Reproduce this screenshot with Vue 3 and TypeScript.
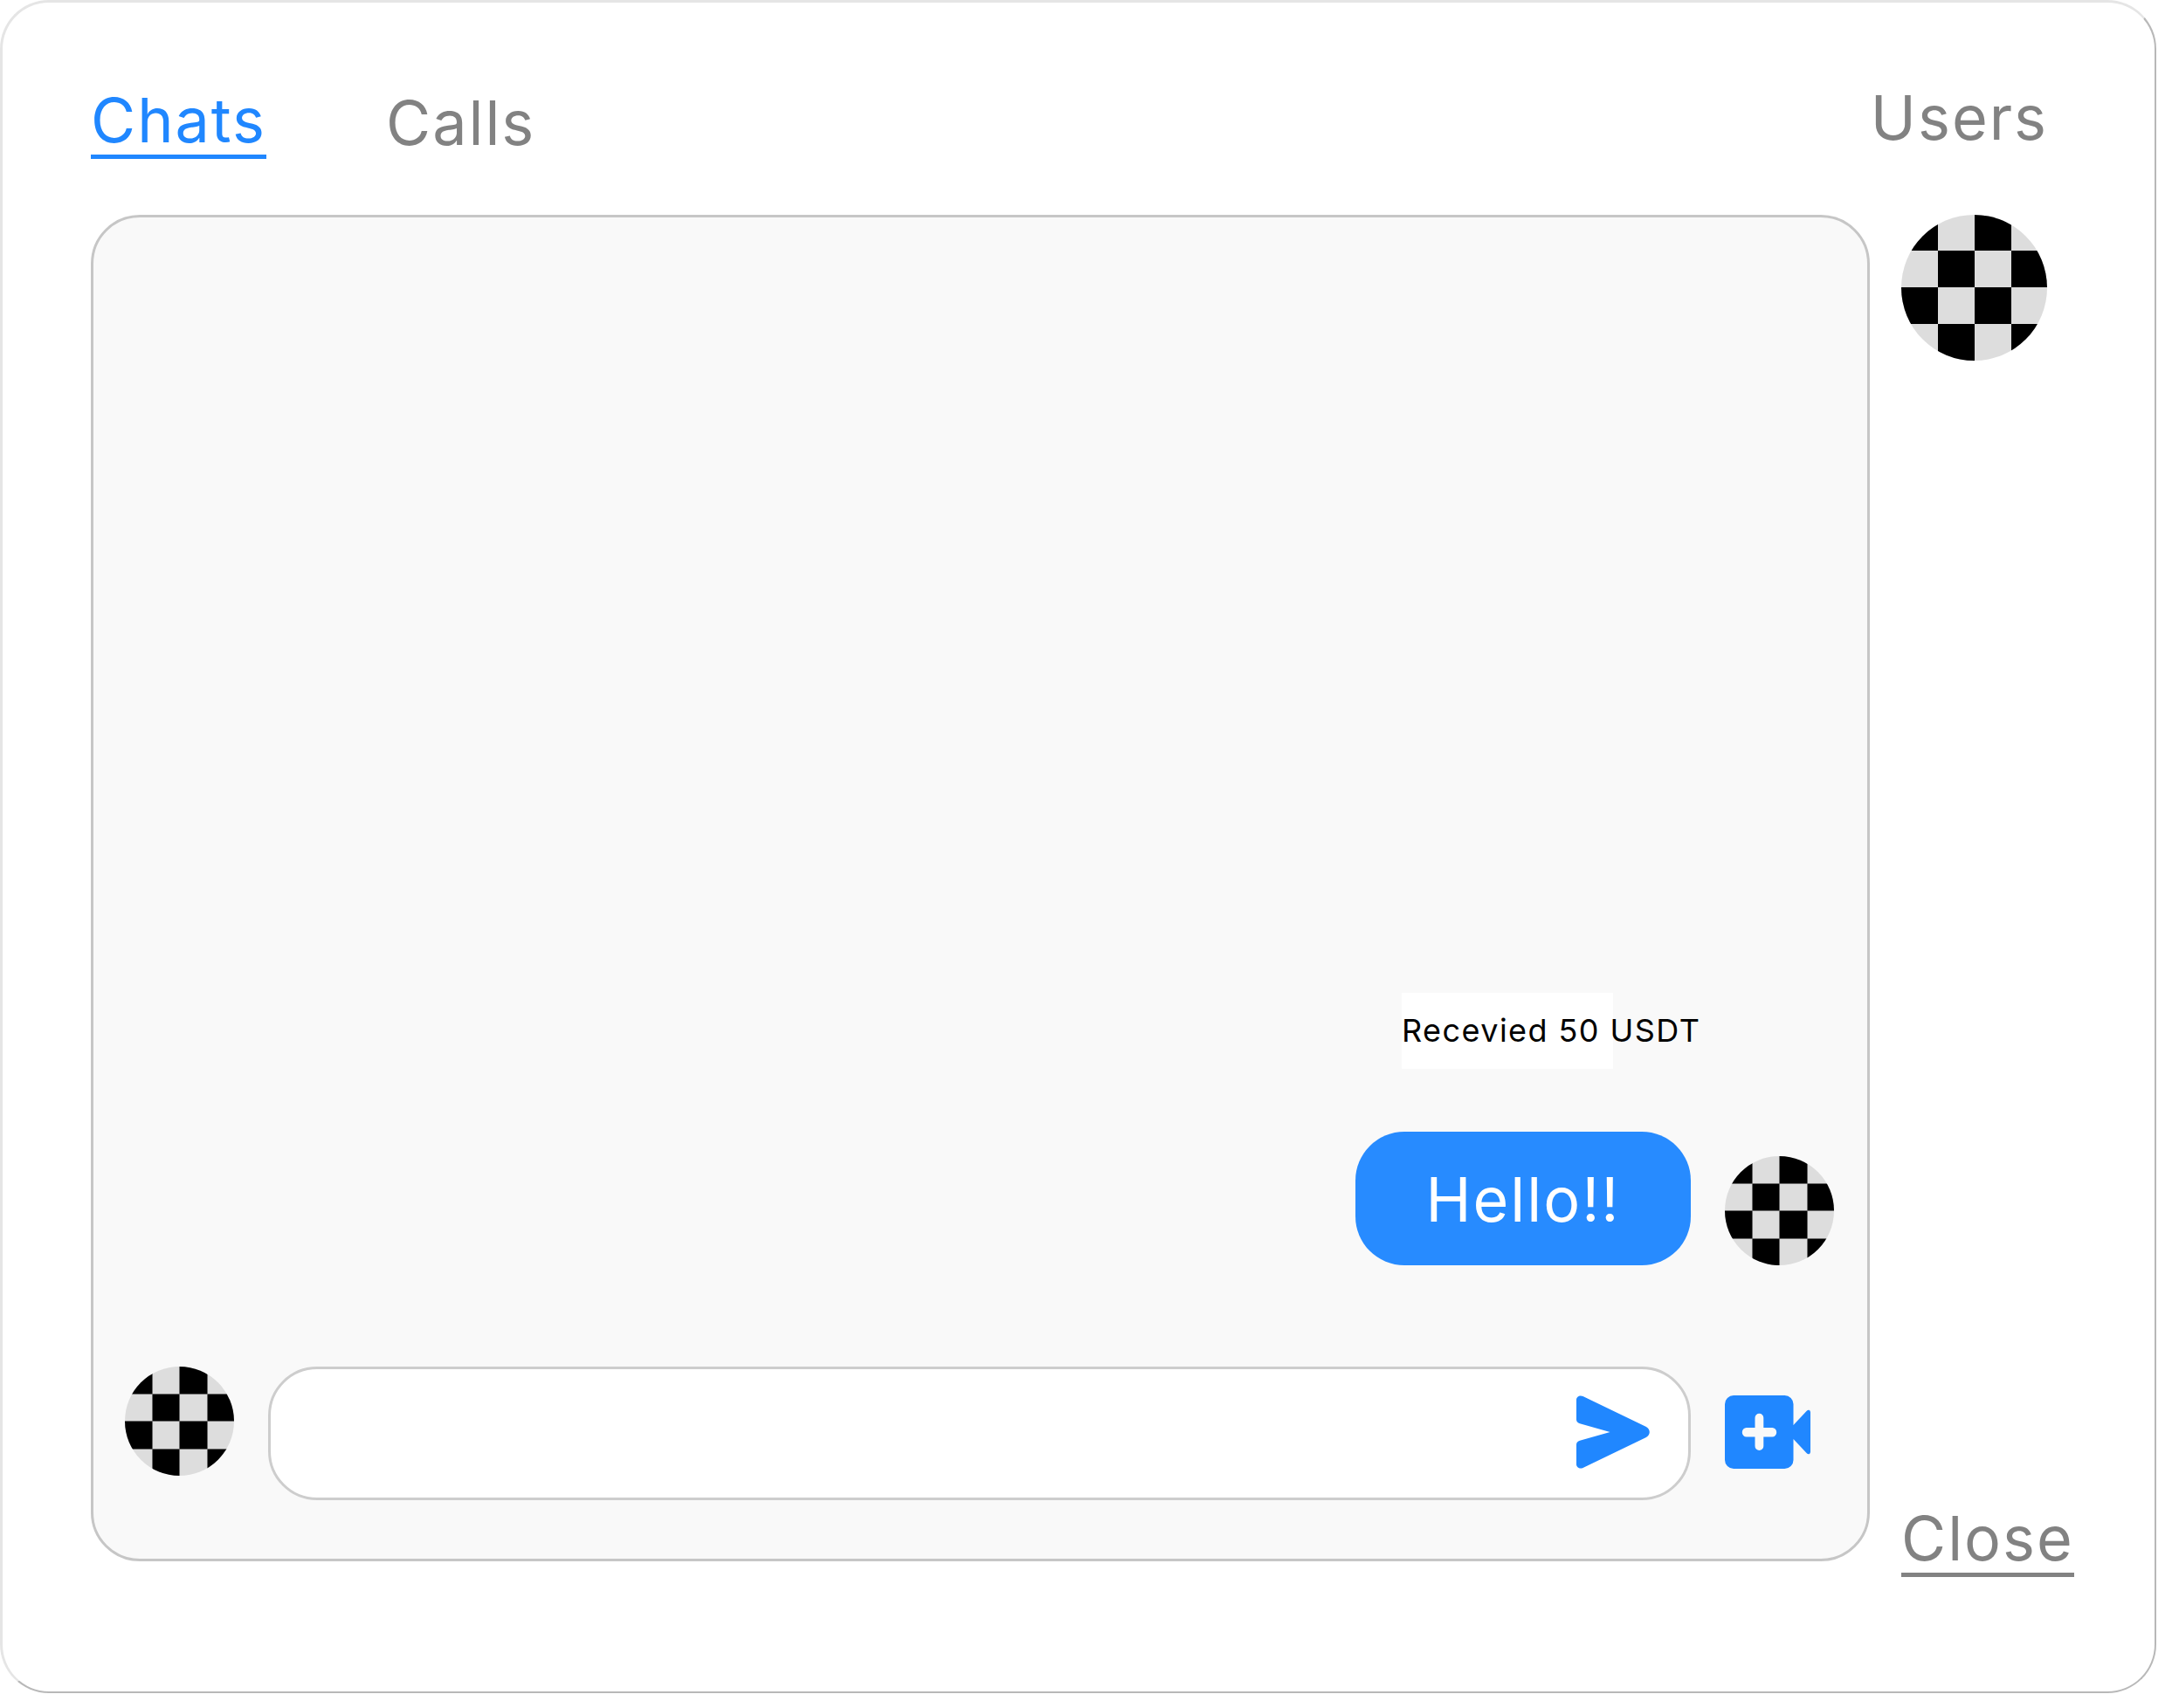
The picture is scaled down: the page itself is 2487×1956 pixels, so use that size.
<script setup lang="ts">
import { computed, defineComponent, h, ref } from 'vue'

interface Message {
  id: number
  text: string
}

const tabs = ['Chats', 'Calls']
const activeTab = ref('Chats')
const draft = ref('')
const messages = ref<Message[]>([{ id: 1, text: 'Hello!!' }])
const canSend = computed(() => draft.value.trim().length > 0)

function send(): void {
  if (!canSend.value) return
  messages.value.push({ id: messages.value.length + 1, text: draft.value.trim() })
  draft.value = ''
}

// Placeholder portrait: a 4 x 4 checkerboard, clipped to a circle by CSS.
const Avatar = defineComponent({
  props: { size: { type: Number, required: true }, seams: Boolean },
  setup(props) {
    return () => {
      const cell = Math.ceil(props.size / 4)
      const shapes = []
      for (let row = 0; row < 4; row++) {
        for (let col = 0; col < 4; col++) {
          if ((row + col) % 2 === 0) {
            shapes.push(h('rect', { x: col * cell, y: row * cell, width: cell, height: cell, fill: '#000' }))
          }
        }
      }
      if (props.seams) {
        const offsets = [31, 62, 94]
        const d = offsets.map((o) => `M${o} 0h1v125h-1zM0 ${o}h125v1h-125z`).join('')
        return h('svg', { viewBox: '0 0 125 125', width: props.size, height: props.size, 'aria-hidden': 'true' }, [
          h('path', { fill: '#000', d: 'M0 0h31v31h-31zM63 0h31v31h-31zM32 32h30v30h-30zM95 32h30v30h-30zM0 63h31v31h-31zM63 63h31v31h-31zM32 95h30v30h-30zM95 95h30v30h-30z' }),
          h('path', { fill: '#6a6a6a', d }),
        ])
      }
      return h('svg', { viewBox: `0 1 ${props.size} ${props.size}`, width: props.size, height: props.size, 'aria-hidden': 'true' }, shapes)
    }
  },
})
</script>

<template>
  <div class="page">
    <main class="card">
      <header class="header">
        <nav class="tabs" aria-label="Sections">
          <button
            v-for="tab in tabs"
            :key="tab"
            type="button"
            class="text-button"
            :class="{ active: tab === activeTab }"
            @click="activeTab = tab"
          >{{ tab }}</button>
        </nav>
        <h2 class="users-title">Users</h2>
      </header>

      <div class="body">
        <section class="panel" aria-label="Conversation">
          <p class="notice">Recevied 50 USDT</p>
          <div v-for="message in messages" :key="message.id" class="message">
            <p class="bubble">{{ message.text }}</p>
            <Avatar class="avatar" :size="125" seams />
          </div>

          <form class="composer" @submit.prevent="send">
            <Avatar class="avatar self" :size="125" seams />
            <div class="field">
              <input v-model="draft" type="text" class="input" aria-label="Message" />
              <button type="submit" class="icon-button" aria-label="Send">
                <svg width="84" height="84" viewBox="0 0 84 84" aria-hidden="true">
                  <path fill="#2087ff" d="M0 5C0 1.500 4 -.7 7.500 1L79.500 35.800C85.200 38.500 85.200 45.500 79.500 48.200L7.500 83C4 84.700 0 82.500 0 79V56.500C0 54 1.500 52.300 4 51.700L38.500 42L4 32.300C1.500 31.500 0 30 0 27.500Z" />
                </svg>
              </button>
            </div>
            <button type="button" class="icon-button video" aria-label="Start video call">
              <svg width="98" height="84" viewBox="0 0 98 84" aria-hidden="true">
                <path fill="#2087ff" fill-rule="evenodd" d="M10 0H68.500A10 10 0 0 1 78.500 10V34L93.500 18Q95 16.500 96.500 16.800Q98 17.200 98 19.500V64.500Q98 66.800 96.500 67.200Q95 67.500 93.500 66L78.500 50V74A10 10 0 0 1 68.500 84H10A10 10 0 0 1 0 74V10A10 10 0 0 1 10 0ZM34.500 25.700V37H24.700A4.900 5.200 0 0 0 24.700 47.400H34.500V58A4.900 5 0 0 0 44.300 58V47.400H54.300A4.900 5.200 0 0 0 54.300 37H44.300V25.700A4.900 5 0 0 0 34.500 25.700Z" />
              </svg>
            </button>
          </form>
        </section>

        <aside class="side">
          <Avatar class="avatar" :size="167" />
          <button type="button" class="text-button underlined">Close</button>
        </aside>
      </div>
    </main>
  </div>
</template>

<style>
body {
  margin: 0;
  background: #fff;
}
</style>

<style scoped>
.page {
  box-sizing: border-box;
  display: flex;
  min-height: 100vh;
  padding: 0 18px 17px 0;
  font-family: Inter, "Liberation Sans", sans-serif;
  font-optical-sizing: none;
  font-size: 70px;
  font-weight: 400;
  letter-spacing: 2px;
  color: #828282;
}

.card {
  box-sizing: border-box;
  display: flex;
  flex: 1;
  flex-direction: column;
  min-width: 0;
  padding: 96px 94px 131px 101px;
  border: 3px solid #e5e5e5;
  border-right: 2px solid #b8b8b8;
  border-bottom: 2px solid #b8b8b8;
  border-radius: 56px;
  background: #fff;
}

.header {
  display: flex;
  align-items: flex-start;
  justify-content: space-between;
  padding: 0 28px 64px 0;
}

.tabs {
  display: flex;
  align-items: center;
  gap: 137px;
}

.text-button {
  padding: 0;
  border: 0;
  background: none;
  color: inherit;
  font: inherit;
  letter-spacing: inherit;
  line-height: 78px;
  cursor: pointer;
}

.text-button.active {
  border-bottom: 5px solid #2087ff;
  color: #2087ff;
}

.text-button.underlined {
  border-bottom: 5px solid #828282;
}

.users-title {
  margin: 0;
  font-size: 70px;
  font-weight: inherit;
  line-height: 72px;
}

.body {
  display: flex;
  flex: 1;
  gap: 36px;
}

.panel {
  display: flex;
  flex: 1;
  flex-direction: column;
  justify-content: flex-end;
  min-width: 0;
  margin-bottom: 18px;
  padding: 36px 38px 67px 36px;
  border: 3px solid #c6c6c6;
  border-radius: 56px;
  background: #f9f9f9;
}

.side {
  display: flex;
  flex: none;
  flex-direction: column;
  align-items: flex-start;
  justify-content: space-between;
  width: 196px;
}

.avatar {
  display: block;
  flex: none;
  border-radius: 50%;
  background: #ddd;
}

.notice {
  align-self: flex-end;
  width: 242px;
  margin: 0 253px 72px 0;
  background: #fff;
  color: #000;
  font-size: 36px;
  letter-spacing: 0.04em;
  line-height: 87px;
  white-space: nowrap;
}

.message {
  display: flex;
  align-items: flex-end;
  justify-content: flex-end;
  gap: 39px;
}

.bubble {
  box-sizing: border-box;
  min-width: 384px;
  margin: 0;
  padding: 39px 80px 36px;
  border-radius: 56px;
  background: #278bff;
  color: #fff;
  line-height: 78px;
  text-align: center;
}

.composer {
  display: flex;
  align-items: center;
  gap: 39px;
  margin-top: 116px;
}

.self {
  align-self: flex-start;
}

.field {
  box-sizing: border-box;
  display: flex;
  flex: 1;
  align-items: center;
  min-width: 0;
  height: 153px;
  padding: 0 44px 0 56px;
  border: 3px solid #cdcdcd;
  border-radius: 56px;
  background: #fff;
}

.input {
  flex: 1;
  min-width: 0;
  height: 100px;
  padding: 0;
  border: 0;
  outline: none;
  background: none;
  color: #000;
  font: inherit;
}

.icon-button {
  display: block;
  flex: none;
  padding: 0 0 4px;
  border: 0;
  background: none;
  cursor: pointer;
}

.icon-button svg {
  display: block;
}

.video {
  width: 125px;
}
</style>
